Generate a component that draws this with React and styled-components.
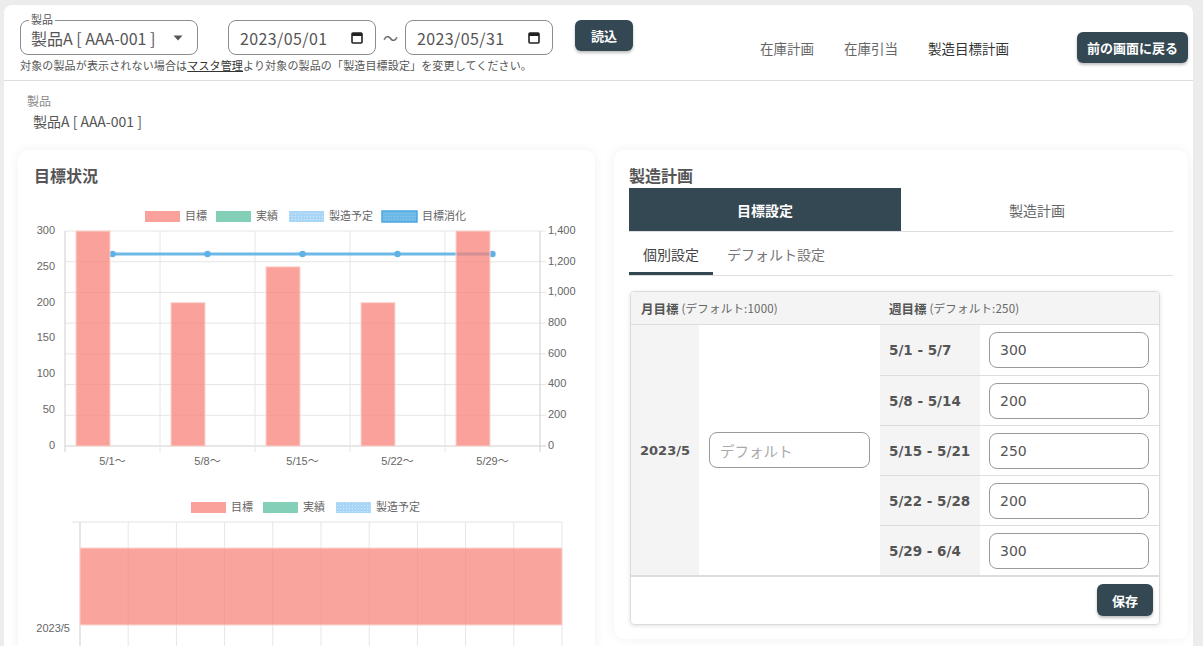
import React from "react";
import styled, { createGlobalStyle } from "styled-components";

const DARK = "#344854";
const PINK = "#f9a19a";
const GREEN = "#83cfb7";
const LBLUE = "#a9d5f6";
const BLUE = "#6cb9e8";

const Global = createGlobalStyle`
  html, body { margin: 0; padding: 0; overflow: hidden; }
  body {
    background: #ececec;
    font-family: "Noto Sans CJK JP", "Noto Sans", sans-serif;
    color: #555;
  }
  * { box-sizing: border-box; }
`;

const Panel = styled.div`
  margin: 5px 10px 0 4px;
  background: #fff;
  border-radius: 8px 8px 0 0;
  min-height: 700px;
`;

const Header = styled.header`
  display: flex;
  align-items: flex-start;
  height: 76px;
  padding: 15px 5px 0 16px;
  border-bottom: 1px solid #dedede;
`;

const LeftGroup = styled.div`
  display: flex;
  flex-direction: column;
`;

const Controls = styled.div`
  display: flex;
  align-items: flex-start;
`;

const FieldBox = styled.div`
  position: relative;
  display: flex;
  align-items: center;
  justify-content: space-between;
  width: ${(p) => p.$w}px;
  height: 35px;
  border: 1px solid #8c8c8c;
  border-radius: 8px;
  padding: 0 ${(p) => p.$pr}px 0 ${(p) => p.$pl}px;
  font-size: 16px;
  color: #555;
  letter-spacing: ${(p) => p.$ls || 0}px;
  white-space: pre;
`;

const Legend = styled.span`
  position: absolute;
  top: -9px;
  left: 8px;
  padding: 0 2px;
  background: #fff;
  font-size: 11px;
  line-height: 14px;
  color: #555;
`;

const Spacer = styled.span`
  width: ${(p) => p.$w}px;
  flex: none;
`;

const Tilde = styled.span`
  width: 29px;
  height: 35px;
  display: flex;
  align-items: center;
  justify-content: center;
  font-size: 15px;
  color: #666;
`;

const DarkButton = styled.button`
  height: ${(p) => p.$h || 31}px;
  padding: 0 ${(p) => p.$px}px;
  margin-left: ${(p) => p.$ml || 0}px;
  border: none;
  border-radius: 6px;
  background: ${DARK};
  color: #fff;
  font-family: "Noto Sans CJK JP", sans-serif;
  font-weight: 700;
  font-size: 13px;
  box-shadow: 0 2px 3px rgba(0, 0, 0, 0.25);
  cursor: pointer;
`;

const Helper = styled.p`
  margin: 3px 0 0 0;
  font-size: 11px;
  letter-spacing: 0.15px;
  line-height: 14px;
  color: #555;
  white-space: nowrap;
  a { color: #333; text-decoration: underline; }
`;

const Nav = styled.nav`
  margin-left: auto;
  margin-top: 12px;
  display: flex;
  align-items: center;
`;

const NavLink = styled.a`
  font-size: 13.5px;
  margin-right: 30px;
  color: ${(p) => (p.$active ? "#333" : "#666")};
  &:last-of-type { margin-right: 0; }
`;

const Content = styled.div`
  padding: 0 0 0 14px;
`;

const Info = styled.div`
  padding: 12px 0 0 9px;
`;

const InfoLabel = styled.div`
  font-size: 12px;
  line-height: 16px;
  color: #8a8a8a;
`;

const InfoValue = styled.div`
  margin-top: 2px;
  padding-left: 6px;
  font-size: 14px;
  line-height: 20px;
  color: #555;
  white-space: pre;
`;

const Cards = styled.div`
  margin-top: 19px;
  display: grid;
  grid-template-columns: 577px 574px;
  column-gap: 19px;
  align-items: start;
`;

const Card = styled.section`
  background: #fff;
  border-radius: 10px;
  box-shadow: 0 0 12px rgba(0, 0, 0, 0.06);
  padding: ${(p) => p.$pad};
`;

const CardTitle = styled.h2`
  margin: 0;
  font-size: 16px;
  line-height: 20px;
  font-weight: 700;
  color: #555;
  padding: ${(p) => p.$pad || 0};
`;

const ChartSvg = styled.svg`
  display: block;
  font-family: "Liberation Sans", "Noto Sans CJK JP", sans-serif;
`;

const Tabs = styled.div`
  margin-top: 3px;
  display: grid;
  grid-template-columns: 1fr 1fr;
  border-bottom: 1px solid #ddd;
`;

const Tab = styled.div`
  height: 43px;
  display: flex;
  align-items: center;
  justify-content: center;
  font-size: 14px;
  font-weight: ${(p) => (p.$active ? 700 : 400)};
  background: ${(p) => (p.$active ? DARK : "#fff")};
  color: ${(p) => (p.$active ? "#fff" : "#666")};
`;

const SubTabs = styled.div`
  display: flex;
  border-bottom: 1px solid #ddd;
`;

const SubTab = styled.div`
  height: 43px;
  padding: 0 14px;
  display: flex;
  align-items: center;
  font-size: 14px;
  color: ${(p) => (p.$active ? "#444" : "#777")};
  box-shadow: ${(p) => (p.$active ? `inset 0 -3px 0 ${DARK}` : "none")};
`;

const TableBox = styled.div`
  margin: 15px 13px 0 1px;
  border: 1px solid #dcdcdc;
  border-radius: 4px;
  box-shadow: 0 1px 4px rgba(0, 0, 0, 0.12);
  overflow: hidden;
`;

const HeadRow = styled.div`
  display: grid;
  grid-template-columns: 249px 1fr;
  height: 33px;
  background: #f4f4f4;
  border-bottom: 1px solid #ddd;
`;

const HeadCell = styled.div`
  display: flex;
  align-items: center;
  padding-left: ${(p) => p.$pl}px;
  font-size: 11.5px;
  color: #666;
  letter-spacing: 0.2px;
  b { font-size: 12.5px; color: #555; margin-right: 3px; letter-spacing: 0; }
`;

const Body = styled.div`
  display: flex;
  border-bottom: 2px solid #ddd;
`;

const MonthLabel = styled.div`
  width: 68px;
  background: #f4f4f4;
  display: flex;
  align-items: center;
  padding-left: 9px;
  font-family: "DejaVu Sans", "Noto Sans CJK JP", sans-serif;
  font-weight: 700;
  font-size: 13px;
  color: #555;
`;

const MonthCell = styled.div`
  width: 181px;
  display: flex;
  align-items: center;
  padding: 0 10px;
`;

const WeekList = styled.div`
  flex: 1;
  display: flex;
  flex-direction: column;
`;

const WeekRow = styled.div`
  display: flex;
  height: 50px;
  border-top: ${(p) => (p.$first ? "none" : "1px solid #ddd")};
`;

const WeekLabel = styled.div`
  width: 100px;
  background: #f4f4f4;
  display: flex;
  align-items: center;
  padding-left: 9px;
  font-family: "DejaVu Sans", "Noto Sans CJK JP", sans-serif;
  font-weight: 700;
  font-size: 13.5px;
  color: #555;
`;

const WeekCell = styled.div`
  flex: 1;
  display: flex;
  align-items: center;
  padding: 0 10px 0 9px;
`;

const TextInput = styled.input`
  width: 100%;
  height: 36px;
  border: 1px solid #9a9a9a;
  border-radius: 8px;
  padding: 0 10px;
  font-family: ${(p) => (p.$num ? '"DejaVu Sans", sans-serif' : '"Noto Sans CJK JP", sans-serif')};
  font-size: ${(p) => (p.$num ? 14 : 14.5)}px;
  color: #555;
  background: #fff;
  outline: none;
  &::placeholder { color: #aaa; }
`;

const Footer = styled.div`
  display: flex;
  justify-content: flex-end;
  padding: 7px 6px 8px 0;
`;

function CalendarIcon() {
  return (
    <svg width="12" height="13" viewBox="0 0 12 13">
      <rect x="1" y="2" width="10" height="10" rx="1" fill="none" stroke="#222" strokeWidth="1.6" />
      <rect x="1" y="2" width="10" height="3" fill="#222" />
    </svg>
  );
}

function Caret() {
  return (
    <svg width="10" height="6" viewBox="0 0 10 6">
      <path d="M0.5 0.5 L9.5 0.5 L5 5.5 Z" fill="#555" />
    </svg>
  );
}

function DateBox({ value }) {
  return (
    <FieldBox $w={148} $pl={11} $pr={12} $ls={0.4}>
      <span>{value}</span>
      <CalendarIcon />
    </FieldBox>
  );
}

function LegendItem({ x, y, label, fill, pattern }) {
  return (
    <g>
      <rect x={x} y={y} width={35} height={11} fill={pattern ? "url(#dots)" : fill} />
      <text x={x + 40} y={y + 6} fontSize="11" fill="#666" dominantBaseline="middle">
        {label}
      </text>
    </g>
  );
}

function ChartDefs() {
  return (
    <defs>
      <pattern id="dots" width="3" height="3" patternUnits="userSpaceOnUse">
        <rect width="3" height="3" fill={LBLUE} />
        <circle cx="1.5" cy="1.5" r="0.6" fill="#d7ecfb" />
      </pattern>
      <pattern id="dots2" width="3" height="3" patternUnits="userSpaceOnUse">
        <rect width="3" height="3" fill={BLUE} />
        <circle cx="1.5" cy="1.5" r="0.6" fill="#8ccbf0" />
      </pattern>
    </defs>
  );
}

function WeeklyChart() {
  const L = 47, R = 522, T = 31, B = 246, cw = 95;
  const cats = ["5/1〜", "5/8〜", "5/15〜", "5/22〜", "5/29〜"];
  const vals = [300, 200, 250, 200, 300];
  const lineY = B - (1250 / 1400) * (B - T);
  const rightLabels = ["1,400", "1,200", "1,000", "800", "600", "400", "200", "0"];
  const leftLabels = [300, 250, 200, 150, 100, 50, 0];
  return (
    <ChartSvg width="576" height="280" viewBox="0 0 576 280">
      <ChartDefs />
      <LegendItem x={127} y={11} label="目標" fill={PINK} />
      <LegendItem x={198} y={11} label="実績" fill={GREEN} />
      <LegendItem x={271} y={11} label="製造予定" pattern />
      <g>
        <rect x={364} y={11} width={35} height={11} fill="url(#dots2)" stroke="#4da6e0" strokeWidth="1.5" />
        <text x={404} y={17} fontSize="11" fill="#666" dominantBaseline="middle">目標消化</text>
      </g>
      {rightLabels.map((lab, i) => {
        const y = T + (i * (B - T)) / 7;
        return (
          <g key={lab}>
            <line x1={L} x2={R + 6} y1={y} y2={y} stroke={i === 7 ? "#cfcfcf" : "#e6e6e6"} />
            <text x={530} y={y} fontSize="11" fill="#666" dominantBaseline="middle">{lab}</text>
          </g>
        );
      })}
      {[0, 1, 2, 3, 4, 5].map((i) => (
        <line key={i} x1={L + i * cw} x2={L + i * cw} y1={T} y2={B + 6} stroke={i === 0 || i === 5 ? "#cfcfcf" : "#e6e6e6"} />
      ))}
      {leftLabels.map((v) => (
        <text key={v} x={37} y={B - (v / 300) * (B - T)} fontSize="11" fill="#666" textAnchor="end" dominantBaseline="middle">
          {v}
        </text>
      ))}
      <polyline
        points={cats.map((_, i) => `${L + i * cw + 47.5},${lineY}`).join(" ")}
        fill="none"
        stroke={BLUE}
        strokeWidth="3"
      />
      {cats.map((_, i) => (
        <circle key={i} cx={L + i * cw + 47.5} cy={lineY} r="3.2" fill="#5fb1e6" />
      ))}
      {vals.map((v, i) => {
        const y = B - (v / 300) * (B - T);
        return (
          <rect key={i} x={L + i * cw + 11} y={y} width={34} height={B - y} fill="rgba(247,130,120,0.75)" stroke="#fbd6cf" strokeWidth="1" />
        );
      })}
      {cats.map((c, i) => (
        <text key={c} x={L + i * cw + 47.5} y={262} fontSize="11" fill="#666" textAnchor="middle" dominantBaseline="middle">
          {c}
        </text>
      ))}
    </ChartSvg>
  );
}

function MonthlyChart() {
  const L = 62, R = 544, T = 42;
  const step = (R - L) / 10;
  return (
    <ChartSvg width="576" height="200" viewBox="0 0 576 200">
      <ChartDefs />
      <LegendItem x={173} y={22} label="目標" fill={PINK} />
      <LegendItem x={245} y={22} label="実績" fill={GREEN} />
      <LegendItem x={318} y={22} label="製造予定" pattern />
      <line x1={54} x2={R} y1={T} y2={T} stroke="#e3e3e3" />
      {Array.from({ length: 11 }, (_, i) => (
        <line key={i} x1={L + i * step} x2={L + i * step} y1={T} y2={200} stroke={i === 0 ? "#cfcfcf" : "#e6e6e6"} />
      ))}
      <rect x={L} y={68} width={R - L} height={77} fill="rgba(247,130,120,0.72)" stroke="#fbd6cf" strokeWidth="1" />
      <text x={52} y={149} fontSize="11" fill="#666" textAnchor="end" dominantBaseline="middle">2023/5</text>
    </ChartSvg>
  );
}

const weeks = [
  ["5/1 - 5/7", "300"],
  ["5/8 - 5/14", "200"],
  ["5/15 - 5/21", "250"],
  ["5/22 - 5/28", "200"],
  ["5/29 - 6/4", "300"],
];

export default function App() {
  return (
    <>
      <Global />
      <Panel>
        <Header>
          <LeftGroup>
            <Controls>
              <FieldBox $w={178} $pl={10} $pr={14}>
                <Legend>製品</Legend>
                <span>製品A [ AAA-001 ]</span>
                <Caret />
              </FieldBox>
              <Spacer $w={30} />
              <DateBox value="2023/05/01" />
              <Tilde>〜</Tilde>
              <DateBox value="2023/05/31" />
              <DarkButton $px={16} $ml={22}>読込</DarkButton>
            </Controls>
            <Helper>
              対象の製品が表示されない場合は<a>マスタ管理</a>より対象の製品の「製造目標設定」を変更してください。
            </Helper>
          </LeftGroup>
          <Nav>
            <NavLink>在庫計画</NavLink>
            <NavLink>在庫引当</NavLink>
            <NavLink $active>製造目標計画</NavLink>
            <DarkButton $px={10} $ml={68}>前の画面に戻る</DarkButton>
          </Nav>
        </Header>
        <Content>
          <Info>
            <InfoLabel>製品</InfoLabel>
            <InfoValue>製品A [ AAA-001 ]</InfoValue>
          </Info>
          <Cards>
            <Card $pad="0">
              <CardTitle $pad="15px 16px 15px 16px">目標状況</CardTitle>
              <WeeklyChart />
              <MonthlyChart />
            </Card>
            <Card $pad="15px 15px 14px 15px">
              <CardTitle>製造計画</CardTitle>
              <Tabs>
                <Tab $active>目標設定</Tab>
                <Tab>製造計画</Tab>
              </Tabs>
              <SubTabs>
                <SubTab $active>個別設定</SubTab>
                <SubTab>デフォルト設定</SubTab>
              </SubTabs>
              <TableBox>
                <HeadRow>
                  <HeadCell $pl={10}>
                    <b>月目標</b>(デフォルト:1000)
                  </HeadCell>
                  <HeadCell $pl={9}>
                    <b>週目標</b>(デフォルト:250)
                  </HeadCell>
                </HeadRow>
                <Body>
                  <MonthLabel>2023/5</MonthLabel>
                  <MonthCell>
                    <TextInput placeholder="デフォルト" readOnly />
                  </MonthCell>
                  <WeekList>
                    {weeks.map(([label, val], i) => (
                      <WeekRow key={label} $first={i === 0}>
                        <WeekLabel>{label}</WeekLabel>
                        <WeekCell>
                          <TextInput $num defaultValue={val} />
                        </WeekCell>
                      </WeekRow>
                    ))}
                  </WeekList>
                </Body>
                <Footer>
                  <DarkButton $px={15} $h={32}>保存</DarkButton>
                </Footer>
              </TableBox>
            </Card>
          </Cards>
        </Content>
      </Panel>
    </>
  );
}
